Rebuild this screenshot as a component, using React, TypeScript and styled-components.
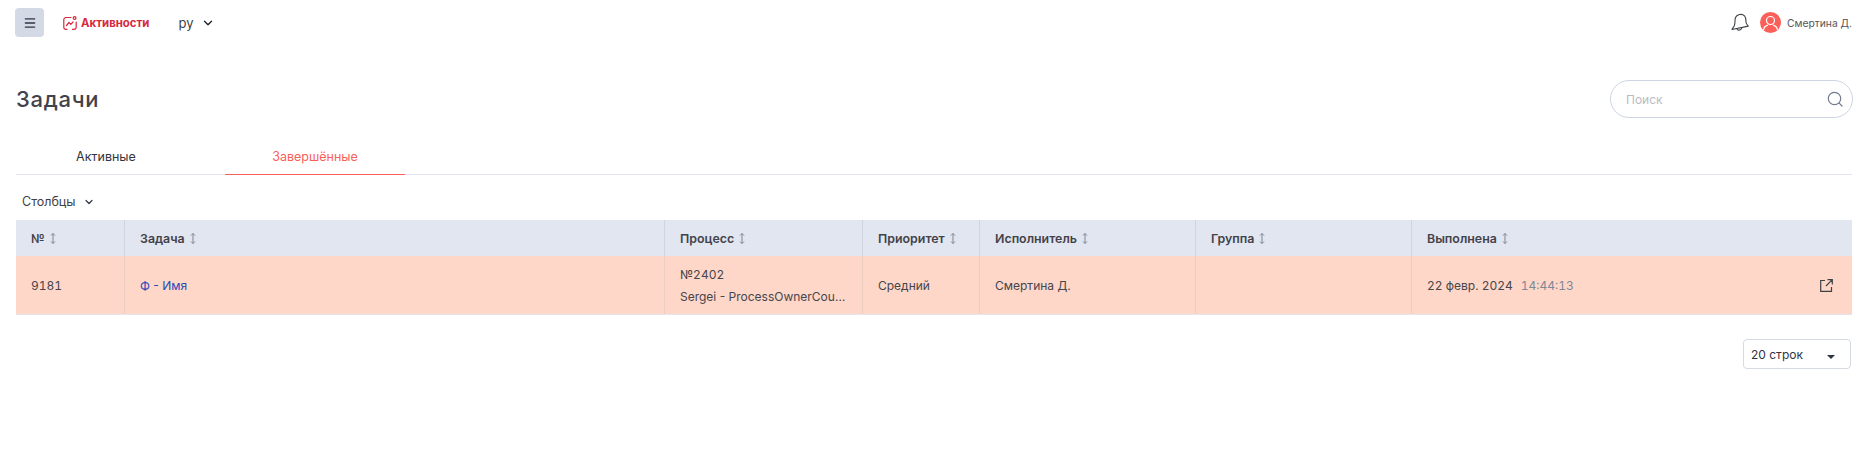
import { FC } from "react";
import styled, { createGlobalStyle } from "styled-components";
import { ChevronDown, Menu } from "lucide-react";

const columns = [
	{ title: "№", width: 108 },
	{ title: "Задача", width: 540 },
	{ title: "Процесс", width: 198 },
	{ title: "Приоритет", width: 117 },
	{ title: "Исполнитель", width: 216 },
	{ title: "Группа", width: 216 },
	{ title: "Выполнена", width: 441 },
];

const GlobalStyle = createGlobalStyle`
	html, body {
		margin: 0;
		padding: 0;
		background: #fff;
		font-family: "Inter", "Liberation Sans", sans-serif;
		color: #3f3f46;
	}
`;

const SortIcon: FC = () => (
	<SortSvg width="6" height="11" viewBox="0 0 6 11" fill="none" stroke="#7d8595" strokeWidth="1">
		<path d="M3 .5v10M1 2.500 3 .5l2 2M1 8.500l2 2 2-2" />
	</SortSvg>
);

const App: FC = () => (
	<Page>
		<GlobalStyle />
		<TopBar>
			<TopLeft>
				<MenuButton>
					<Menu size={14} color="#2f3542" strokeWidth={2.2} />
				</MenuButton>
				<Brand>
					<svg width="14" height="14" viewBox="0 0 14 14" fill="none" stroke="#d6293e" strokeWidth="1.2" strokeLinecap="round">
						<path d="M8 1.500H3A2.200 2.200 0 0 0 .8 3.700v7.600A2.200 2.200 0 0 0 3 13.400h1M9.500 13.400H11a2.200 2.200 0 0 0 2.200-2.200V6" />
						<circle cx="11.600" cy="2" r="1.400" />
						<path d="M3.500 9.500 6 6.500l1.800 1.800L10 6" />
					</svg>
					<BrandText>Активности</BrandText>
				</Brand>
				<Lang>
					<span>ру</span>
					<ChevronDown size={14} color="#1f2430" strokeWidth={2.4} />
				</Lang>
			</TopLeft>
			<TopRight>
				<svg width="18" height="19" viewBox="0 0 18 19" fill="none" stroke="#3f4148" strokeWidth="1.1" strokeLinejoin="round">
					<path d="M4.500 4.500C6 1.200 11 .4 13.500 2.800c1.700 1.700 1.300 4.400 1.500 6.500.2 1.500 1 2.700 2.300 3.800L1 16.500c.2-1 1.500-2 2.200-3.500C4.500 10.500 3.500 7 4.500 4.500z" />
					<path d="M6 15.800c.5 1.700 3.400 2.200 5-.9" />
				</svg>
				<Avatar>
					<svg width="21" height="21" viewBox="0 0 21 21" fill="none" stroke="#fff" strokeWidth="1.2">
						<circle cx="10.500" cy="8.500" r="4" />
						<path d="M3.500 18c.5-3 3-4.500 4.500-4.800M17.500 18c-.5-3-3-4.500-4.500-4.800" />
					</svg>
				</Avatar>
				<UserName>Смертина Д.</UserName>
			</TopRight>
		</TopBar>

		<TitleRow>
			<Title>Задачи</Title>
			<SearchBox>
				<SearchHint>Поиск</SearchHint>
				<svg width="16" height="16" viewBox="0 0 16 16" fill="none" stroke="#6f7a8c" strokeWidth="1.2" strokeLinecap="round">
					<circle cx="7.500" cy="7.500" r="6.200" />
					<path d="m12.200 12.200 2.800 2.800" />
				</svg>
			</SearchBox>
		</TitleRow>

		<Tabs>
			<Tab>Активные</Tab>
			<Tab $active>Завершённые</Tab>
		</Tabs>

		<ColumnsToggle>
			<span>Столбцы</span>
			<ChevronDown size={12} color="#2f3542" strokeWidth={2.4} />
		</ColumnsToggle>

		<Table>
			<HeadRow>
				{columns.map((col) => (
					<HeadCell key={col.title} $width={col.width}>
						{col.title}
						<SortIcon />
					</HeadCell>
				))}
			</HeadRow>
			<BodyRow>
				<BodyCell $width={108}>
					<NumberText>9181</NumberText>
				</BodyCell>
				<BodyCell $width={540}>
					<TaskLink>Ф - Имя</TaskLink>
				</BodyCell>
				<BodyCell $width={198}>
					<ProcessCell>
						<NumberText>№2402</NumberText>
						<ProcessName>Sergei - ProcessOwnerCounter</ProcessName>
					</ProcessCell>
				</BodyCell>
				<BodyCell $width={117}>Средний</BodyCell>
				<BodyCell $width={216}>Смертина Д.</BodyCell>
				<BodyCell $width={216} />
				<LastCell $width={441}>
					<NumberText>
						22 февр. 2024<TimeText>14:44:13</TimeText>
					</NumberText>
					<svg width="13" height="13" viewBox="0 0 13 13" fill="none" stroke="#3f4148" strokeWidth="1.2">
						<path d="M5 1.500H.7v10.800h10.800V8M7.500 .7h4.800v4.800M12.300 .7 6 7" />
					</svg>
				</LastCell>
			</BodyRow>
		</Table>

		<Footer>
			<PageSize>
				<span>20 строк</span>
				<Caret />
			</PageSize>
		</Footer>
	</Page>
);

export default App;

const Page = styled.div`
	height: 454px;
	padding: 0 18px 0 16px;
	box-sizing: border-box;
	overflow: hidden;
`;

const TopBar = styled.header`
	display: flex;
	justify-content: space-between;
	align-items: center;
	height: 45px;
`;

const TopLeft = styled.div`
	display: flex;
	align-items: center;
	margin-left: -1px;
`;

const MenuButton = styled.div`
	display: flex;
	align-items: center;
	justify-content: center;
	width: 29px;
	height: 29px;
	background: #d3dae5;
	border-radius: 4px;
`;

const Brand = styled.div`
	display: flex;
	align-items: center;
	gap: 4px;
	margin-left: 19px;
`;

const BrandText = styled.span`
	font-size: 11.4px;
	font-weight: 700;
	color: #d6293e;
`;

const Lang = styled.div`
	display: flex;
	align-items: center;
	gap: 8px;
	margin-left: 29px;
	font-size: 13px;
	color: #3f3f46;
`;

const TopRight = styled.div`
	display: flex;
	align-items: center;
`;

const Avatar = styled.div`
	display: flex;
	align-items: center;
	justify-content: center;
	width: 21px;
	height: 21px;
	margin-left: 11px;
	border-radius: 50%;
	overflow: hidden;
	background: #fb5f5a;
`;

const UserName = styled.span`
	margin-left: 6px;
	font-size: 10.3px;
	color: #55565c;
`;

const TitleRow = styled.div`
	display: flex;
	justify-content: space-between;
	align-items: center;
	height: 38px;
	margin-top: 35px;
`;

const Title = styled.h1`
	margin: 0;
	font-size: 22px;
	font-weight: 500;
	color: #42424a;
	letter-spacing: 0.7px;
`;

const SearchBox = styled.div`
	display: flex;
	justify-content: space-between;
	align-items: center;
	width: 243px;
	height: 38px;
	margin-right: -1px;
	box-sizing: border-box;
	padding: 0 9px 0 15px;
	border: 1px solid #cfd6e3;
	border-radius: 19px;
`;

const SearchHint = styled.span`
	font-size: 12px;
	color: #b9bcc2;
`;

const Tabs = styled.nav`
	display: flex;
	gap: 29px;
	height: 36px;
	margin-top: 20px;
	border-bottom: 1px solid #e3e6ef;
`;

const Tab = styled.div<{ $active?: boolean }>`
	display: flex;
	align-items: center;
	justify-content: center;
	width: 180px;
	height: 37px;
	box-sizing: border-box;
	font-size: 12.5px;
	color: ${({ $active }) => ($active ? "#fb5f5a" : "#34343c")};
	border-bottom: ${({ $active }) => ($active ? "1px solid #fb5f5a" : "none")};
`;

const ColumnsToggle = styled.div`
	display: flex;
	align-items: center;
	gap: 7px;
	height: 45px;
	box-sizing: border-box;
	padding: 8px 0 0 6px;
	font-size: 12.5px;
	color: #3f3f46;
`;

const Table = styled.div`
	display: flex;
	flex-direction: column;
	border-bottom: 1px solid #e3e6ef;
`;

const HeadRow = styled.div`
	display: flex;
	height: 36px;
	background: #e2e6f0;
`;

const BodyRow = styled.div`
	display: flex;
	height: 58px;
	background: #ffd7c8;
`;

const HeadCell = styled.div<{ $width: number }>`
	display: flex;
	align-items: center;
	gap: 5px;
	width: ${({ $width }) => $width}px;
	flex: none;
	box-sizing: border-box;
	padding-left: 15px;
	font-size: 12.4px;
	font-weight: 600;
	color: #42424a;
	& + & {
		border-left: 1px solid #cfd6e3;
	}
`;

const BodyCell = styled.div<{ $width: number }>`
	display: flex;
	align-items: center;
	width: ${({ $width }) => $width}px;
	flex: none;
	box-sizing: border-box;
	padding-left: 15px;
	font-size: 12px;
	color: #45454c;
	& + & {
		border-left: 1px solid #edcdbf;
	}
`;

const LastCell = styled(BodyCell)`
	justify-content: space-between;
	padding-right: 19px;
`;

const SortSvg = styled.svg`
	flex: none;
`;

const NumberText = styled.span`
	font-variant-numeric: tabular-nums;
`;

const TaskLink = styled.span`
	color: #2a4ab8;
`;

const ProcessCell = styled.div`
	display: flex;
	flex-direction: column;
	gap: 7px;
	min-width: 0;
	width: 100%;
	padding-right: 12px;
`;

const ProcessName = styled.span`
	overflow: hidden;
	white-space: nowrap;
	text-overflow: ellipsis;
`;

const TimeText = styled.span`
	margin-left: 8px;
	color: #7f8794;
`;

const Footer = styled.div`
	display: flex;
	justify-content: flex-end;
	margin-top: 24px;
	padding-right: 1px;
`;

const PageSize = styled.div`
	display: flex;
	align-items: center;
	justify-content: space-between;
	width: 108px;
	height: 30px;
	box-sizing: border-box;
	padding: 0 15px 0 7px;
	border: 1px solid #d5dae3;
	border-radius: 4px;
	font-size: 12px;
	color: #2f3542;
`;

const Caret = styled.i`
	display: block;
	margin-top: 5px;
	border-left: 4px solid transparent;
	border-right: 4px solid transparent;
	border-top: 4px solid #2f3542;
`;
